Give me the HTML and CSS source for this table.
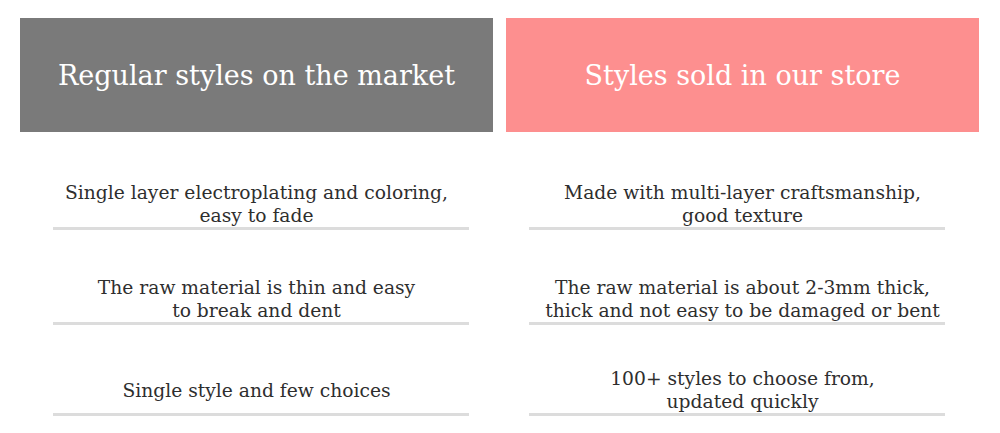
FILE: index.html
```html
<!DOCTYPE html>
<html lang="en">
<head>
<meta charset="utf-8">
<title>Comparison</title>
<link rel="stylesheet" href="styles.css">
</head>
<body>
<div class="compare">
  <div class="col col-market">
    <div class="head">Regular styles on the market</div>
    <div class="row"><div class="txt">Single layer electroplating and coloring,<br>easy to fade</div></div>
    <div class="row"><div class="txt">The raw material is thin and easy<br>to break and dent</div></div>
    <div class="row"><div class="txt">Single style and few choices</div></div>
  </div>
  <div class="col col-store">
    <div class="head">Styles sold in our store</div>
    <div class="row"><div class="txt">Made with multi-layer craftsmanship,<br>good texture</div></div>
    <div class="row"><div class="txt">The raw material is about 2-3mm thick,<br>thick and not easy to be damaged or bent</div></div>
    <div class="row"><div class="txt">100+ styles to choose from,<br>updated quickly</div></div>
  </div>
</div>
</body>
</html>
```
FILE: styles.css
```css
html, body {
  margin: 0;
  padding: 0;
  background: #ffffff;
}
body {
  font-family: "DejaVu Serif", "Liberation Serif", serif;
  color: #2e2e2e;
}
.compare {
  display: flex;
  gap: 13px;
  padding: 18px 0 0 20px;
}
.col {
  width: 473px;
  display: flex;
  flex-direction: column;
}
.head {
  height: 114px;
  display: flex;
  align-items: center;
  justify-content: center;
  color: #ffffff;
  font-size: 27px;
  margin-bottom: 5px;
}
.col-market .head { background: #7a7a7a; }
.col-store .head { background: #fd8f8f; }
.row {
  padding-top: 44px;
  display: flex;
  flex-direction: column;
}
.txt {
  min-height: 46px;
  display: flex;
  flex-direction: column;
  justify-content: center;
  text-align: center;
  font-size: 18.7px;
  line-height: 23px;
}
.row::after {
  content: "";
  display: block;
  height: 3px;
  background: #dcdcdc;
}
.col-market .row::after { margin: 0 24px 0 33px; }
.col-store .row::after { margin: 0 34px 0 23px; }
.row:nth-child(3) { padding-top: 46px; }
.row:nth-child(4) { padding-top: 42px; }
```
